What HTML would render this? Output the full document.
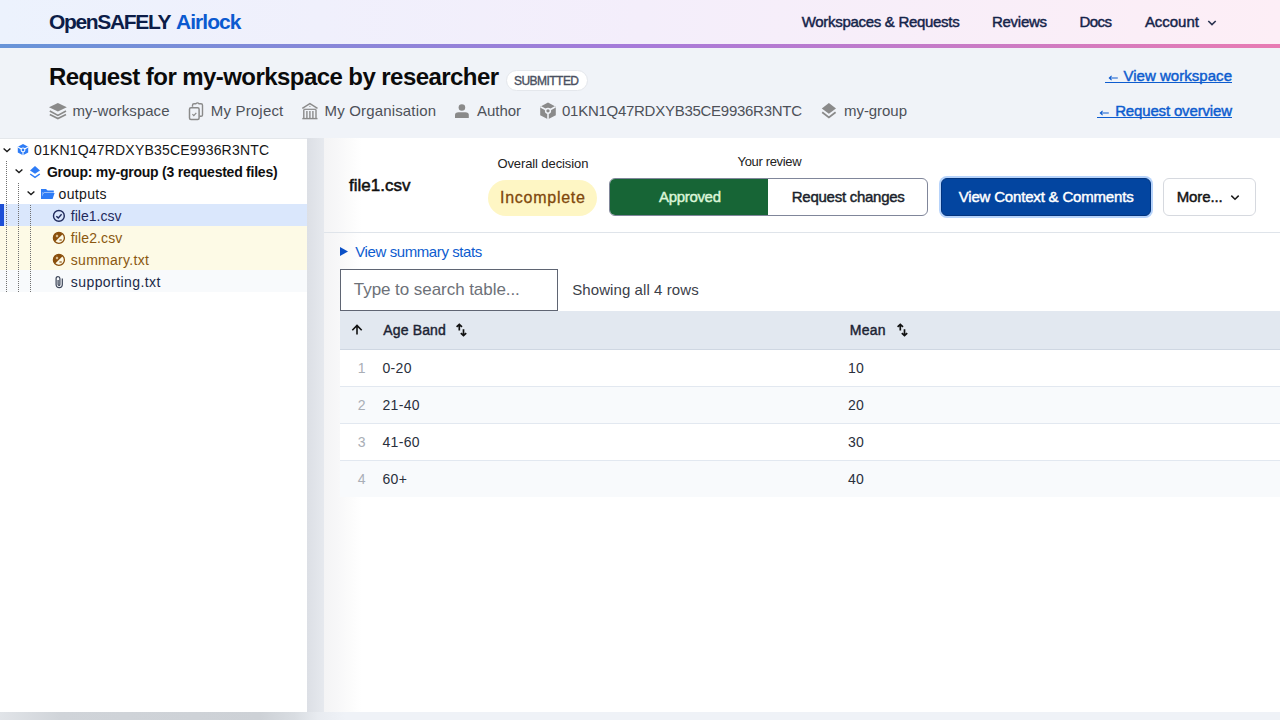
<!DOCTYPE html>
<html><head><meta charset="utf-8"><style>
html,body{margin:0;padding:0;}
body{width:1280px;height:720px;overflow:hidden;position:relative;background:#f0f3f8;font-family:"Liberation Sans",sans-serif;}
.t{position:absolute;white-space:nowrap;}
.ic{position:absolute;}
.hdr{position:absolute;left:0;top:0;width:1280px;height:44px;background:linear-gradient(90deg,#ecf2fd 0%,#f4eefb 50%,#fdeef6 100%);}
.bar{position:absolute;left:0;top:44px;width:1280px;height:4px;background:linear-gradient(90deg,#6794d8 0%,#a77ad9 50%,#e87bb3 100%);}
.badge{position:absolute;box-sizing:border-box;border:1px solid #e4e7ec;border-radius:11px;background:#fff;}
.lnk{position:absolute;height:1.3px;background:#0d5ccf;}
.lp{position:absolute;left:0;top:139px;width:307px;height:573px;background:#fff;box-shadow:0 -1px 0 #e4e7eb;}
.rp{position:absolute;left:324px;top:138px;width:956px;height:574px;background:linear-gradient(90deg,#f4f4f5 0px,#f7f7f8 12px,#fbfbfb 24px,#ffffff 38px);}
.gap{position:absolute;left:307px;top:138px;width:17px;height:574px;background:linear-gradient(90deg,#dcdfe5,#e6e9ee);}
.shadowbot{position:absolute;left:0;top:712px;width:1280px;height:8px;background:linear-gradient(90deg,#e1e4e8 0px,#d0d4d9 60px,#cdd1d6 260px,#d9dde2 295px,#e8ebf0 318px,#eff2f7 345px);}
.dots{position:absolute;width:1px;background:repeating-linear-gradient(180deg,#707070 0px,#707070 1px,transparent 1px,transparent 2px);}
</style></head><body>
<div class="hdr"></div><div class="bar"></div><div class="t" style="left:49.00px;top:11.12px;font-size:21px;line-height:21px;color:#0c1d48;font-weight:700;letter-spacing:-1.340px;">OpenSAFELY</div>
<div class="t" style="left:176.00px;top:11.12px;font-size:21px;line-height:21px;color:#0b5ad0;font-weight:700;letter-spacing:-0.945px;">Airlock</div>
<div class="t" style="left:801.70px;top:14.20px;font-size:15px;line-height:15px;color:#15244a;font-weight:400;letter-spacing:-0.299px;-webkit-text-stroke:0.45px #15244a;">Workspaces &amp; Requests</div>
<div class="t" style="left:992.00px;top:14.20px;font-size:15px;line-height:15px;color:#15244a;font-weight:400;letter-spacing:-0.279px;-webkit-text-stroke:0.45px #15244a;">Reviews</div>
<div class="t" style="left:1079.60px;top:14.20px;font-size:15px;line-height:15px;color:#15244a;font-weight:400;letter-spacing:-0.591px;-webkit-text-stroke:0.45px #15244a;">Docs</div>
<div class="t" style="left:1144.90px;top:14.20px;font-size:15px;line-height:15px;color:#15244a;font-weight:400;letter-spacing:-0.034px;-webkit-text-stroke:0.45px #15244a;">Account</div>
<svg class="ic" style="left:1207px;top:19px" width="10" height="8" viewBox="0 0 10 8"><path d="M1.3 2 L5 5.6 L8.7 2" fill="none" stroke="#2a3350" stroke-width="1.6"/></svg><div class="t" style="left:49.00px;top:64.68px;font-size:24px;line-height:24px;color:#0b0b0b;font-weight:700;letter-spacing:-0.563px;">Request for my-workspace by researcher</div>
<div class="badge" style="left:505.5px;top:70.4px;width:82px;height:21px"></div><div class="t" style="left:514.00px;top:74.84px;font-size:12px;line-height:12px;color:#4a5060;font-weight:400;letter-spacing:-0.541px;-webkit-text-stroke:0.36px #4a5060;">SUBMITTED</div>
<div class="t" style="left:72.50px;top:103.30px;font-size:15px;line-height:15px;color:#4d5159;font-weight:400;letter-spacing:0.027px;">my-workspace</div>
<div class="t" style="left:210.70px;top:103.30px;font-size:15px;line-height:15px;color:#4d5159;font-weight:400;letter-spacing:0.193px;">My Project</div>
<div class="t" style="left:324.50px;top:103.30px;font-size:15px;line-height:15px;color:#4d5159;font-weight:400;letter-spacing:0.162px;">My Organisation</div>
<div class="t" style="left:477.00px;top:103.30px;font-size:15px;line-height:15px;color:#4d5159;font-weight:400;letter-spacing:-0.041px;">Author</div>
<div class="t" style="left:562.00px;top:103.30px;font-size:15px;line-height:15px;color:#4d5159;font-weight:400;letter-spacing:-0.270px;">01KN1Q47RDXYB35CE9936R3NTC</div>
<div class="t" style="left:844.00px;top:103.30px;font-size:15px;line-height:15px;color:#4d5159;font-weight:400;letter-spacing:-0.054px;">my-group</div>
<svg class="ic" style="left:48px;top:101px" width="20" height="20" viewBox="0 0 20 20"><path d="M9.9 1.9 L18.8 6.3 L9.9 10.6 L1 6.3 Z" fill="#8a8a8a"/><path d="M1.8 10 L9.9 14.4 L18 10" fill="none" stroke="#8a8a8a" stroke-width="1.7"/><path d="M1.8 13.5 L9.9 17.6 L18 13.5" fill="none" stroke="#8a8a8a" stroke-width="1.7"/></svg><svg class="ic" style="left:186px;top:101px" width="20" height="20" viewBox="0 0 20 20"><path d="M6.5 5.8 V4.2 Q6.5 2.8 8 2.8 H9.8 Q11.5 1 13 2.8 H15 Q16.5 2.8 16.5 4.2 V14 Q16.5 15.3 15 15.3 H13.6" fill="none" stroke="#8a8a8a" stroke-width="1.4"/><rect x="3.5" y="6.8" width="9.6" height="11.6" rx="1.5" fill="none" stroke="#8a8a8a" stroke-width="1.5"/><path d="M6.4 13.2 L7.8 14.6 L10.3 11.8" fill="none" stroke="#8a8a8a" stroke-width="1.2"/></svg><svg class="ic" style="left:300px;top:101px" width="20" height="20" viewBox="0 0 20 20"><path d="M2.3 7.4 L9.9 2.6 L17.5 7.4" fill="none" stroke="#8a8a8a" stroke-width="1.3"/><path d="M3.4 8.3 H16.4" stroke="#8a8a8a" stroke-width="1.2"/><path d="M3.8 9 V17 M6.9 10 V17 M9.9 10 V17 M12.9 10 V17 M16 9 V17" stroke="#8a8a8a" stroke-width="1.4"/><path d="M2.3 17.6 H17.5" stroke="#8a8a8a" stroke-width="1.4"/><path d="M9.2 5.4 H10.6" stroke="#8a8a8a" stroke-width="0.8"/></svg><svg class="ic" style="left:452px;top:101px" width="20" height="20" viewBox="0 0 20 20"><circle cx="9.9" cy="6.5" r="3.3" fill="#8a8a8a"/><path d="M3 17 V13.8 Q3 11.2 6.5 11.2 H13.3 Q16.8 11.2 16.8 13.8 V17 Z" fill="#8a8a8a"/></svg><svg class="ic" style="left:538px;top:100px" width="20" height="20" viewBox="0 0 20 20"><path d="M10 2.6 L17.8 6.8 V15.2 L10 19.2 L2.2 15.2 V6.8 Z" fill="#8a8a8a"/><path d="M2.5 6.8 L8 9.8 M17.5 6.8 L12 9.8 M10 13 V19.5" stroke="#f0f3f8" stroke-width="1.6"/><circle cx="10" cy="10.8" r="2.4" fill="#8a8a8a" stroke="#f0f3f8" stroke-width="1.5"/></svg><svg class="ic" style="left:819px;top:101px" width="20" height="20" viewBox="0 0 20 20"><path d="M9.9 2 L17 7.4 L9.9 12.8 L2.8 7.4 Z" fill="#8a8a8a"/><path d="M3.2 11.3 L9.9 16.4 L16.6 11.3" fill="none" stroke="#8a8a8a" stroke-width="1.8"/></svg><div class="lnk" style="left:1105px;top:82px;width:127px"></div><div class="lnk" style="left:1096.5px;top:117px;width:135.5px"></div><svg class="ic" style="left:1107.5px;top:75.1px" width="11" height="6" viewBox="0 0 11 6"><path d="M1.4 3 H9.8 M3.6 0.9 L1.3 3 L3.6 5.1" fill="none" stroke="#0d5ccf" stroke-width="1.05"/></svg><div class="t" style="left:1123.40px;top:68.10px;font-size:15px;line-height:15px;color:#0d5ccf;font-weight:400;letter-spacing:0.038px;-webkit-text-stroke:0.45px #0d5ccf;">View workspace</div>
<svg class="ic" style="left:1098.5px;top:110.4px" width="11" height="6" viewBox="0 0 11 6"><path d="M1.4 3 H9.8 M3.6 0.9 L1.3 3 L3.6 5.1" fill="none" stroke="#0d5ccf" stroke-width="1.05"/></svg><div class="t" style="left:1115.20px;top:103.30px;font-size:15px;line-height:15px;color:#0d5ccf;font-weight:400;letter-spacing:-0.162px;-webkit-text-stroke:0.45px #0d5ccf;">Request overview</div>
<div class="shadowbot"></div><div class="gap"></div><div class="lp"></div><div class="rp"></div><div style="position:absolute;left:0;top:204px;width:307px;height:22px;background:#dae7fc"></div><div style="position:absolute;left:0;top:204px;width:4px;height:22px;background:#1d4fd6"></div><div style="position:absolute;left:0;top:226px;width:307px;height:44px;background:#fdfae6"></div><div style="position:absolute;left:0;top:270px;width:307px;height:22px;background:#f8fafc"></div><div class="dots" style="left:6px;top:161px;height:131px"></div><div class="dots" style="left:18px;top:183px;height:109px"></div><div class="dots" style="left:30px;top:205px;height:87px"></div><svg class="ic" style="left:2px;top:146.5px" width="10" height="7" viewBox="0 0 10 7"><path d="M1.6 1.4 L5 4.6 L8.4 1.4" fill="none" stroke="#1a1a1a" stroke-width="1.35"/></svg><svg class="ic" style="left:14px;top:168.3px" width="10" height="7" viewBox="0 0 10 7"><path d="M1.6 1.4 L5 4.6 L8.4 1.4" fill="none" stroke="#1a1a1a" stroke-width="1.35"/></svg><svg class="ic" style="left:26px;top:190.3px" width="10" height="7" viewBox="0 0 10 7"><path d="M1.6 1.4 L5 4.6 L8.4 1.4" fill="none" stroke="#1a1a1a" stroke-width="1.35"/></svg><svg class="ic" style="left:17px;top:143px" width="12" height="13" viewBox="0 0 12 13"><path d="M6 1 L11.2 3.8 V9.4 L6 12.3 L0.8 9.4 V3.8 Z" fill="#2e7cf6"/><path d="M0.9 3.9 L4.4 5.9 M11.1 3.9 L7.6 5.9 M6 8.7 V12.5" stroke="#fff" stroke-width="1.1"/><circle cx="6" cy="6.9" r="1.9" fill="#2e7cf6" stroke="#fff" stroke-width="1.1"/></svg><svg class="ic" style="left:25px;top:161.5px" width="20" height="20" viewBox="0 0 20 20"><path d="M10 4.1 L15 8.4 L10 11.8 L5 8.4 Z" fill="#2e7cf6"/><path d="M5.2 12 L10 15.3 L14.8 12" fill="none" stroke="#2e7cf6" stroke-width="1.5"/></svg><svg class="ic" style="left:40px;top:188px" width="15" height="12" viewBox="0 0 15 12"><path d="M1 1 H6 L7.6 2.6 H13.8 V4.4 H4.4 Q3.2 4.4 3 5.6 L2.4 9 V4 H1 Z" fill="#2e7cf6"/><path d="M1 11 V3.5 H2.2 V8.4 L3.3 5.6 Q3.5 5 4.2 5 H14.6 L12.6 11 Z" fill="#2e7cf6"/></svg><svg class="ic" style="left:52px;top:209px" width="14" height="14" viewBox="0 0 14 14"><circle cx="6.9" cy="6.9" r="5.4" fill="none" stroke="#1f2a5c" stroke-width="1.4"/><path d="M4.3 7.2 L6.3 8.9 L9.6 5.2" fill="none" stroke="#1f2a5c" stroke-width="1.4"/></svg><svg class="ic" style="left:52px;top:231px" width="14" height="14" viewBox="0 0 14 14"><circle cx="6.9" cy="6.9" r="5.5" fill="none" stroke="#8a4f0c" stroke-width="1.3"/><path d="M3 10.8 A5.5 5.5 0 0 1 10.8 3 Z" fill="#8a4f0c"/><path d="M3.8 5 H6.2 M5 3.8 V6.2" stroke="#f0dcb4" stroke-width="1.1"/><path d="M7.4 9.0 H9.8" stroke="#8a4f0c" stroke-width="1.1"/></svg><svg class="ic" style="left:52px;top:253px" width="14" height="14" viewBox="0 0 14 14"><circle cx="6.9" cy="6.9" r="5.5" fill="none" stroke="#8a4f0c" stroke-width="1.3"/><path d="M3 10.8 A5.5 5.5 0 0 1 10.8 3 Z" fill="#8a4f0c"/><path d="M3.8 5 H6.2 M5 3.8 V6.2" stroke="#f0dcb4" stroke-width="1.1"/><path d="M7.4 9.0 H9.8" stroke="#8a4f0c" stroke-width="1.1"/></svg><svg class="ic" style="left:53px;top:274px" width="12" height="16" viewBox="0 0 12 16"><path d="M9.3 4.6 V10.6 A3.1 3.1 0 0 1 3.1 10.6 V4.6 A1.9 1.9 0 0 1 6.9 4.6 V10.4 A0.9 0.9 0 0 1 5.1 10.4 V6" fill="none" stroke="#3a4356" stroke-width="1.2"/></svg><div class="t" style="left:34.00px;top:142.95px;font-size:14px;line-height:14px;color:#161616;font-weight:400;letter-spacing:0.188px;">01KN1Q47RDXYB35CE9936R3NTC</div>
<div class="t" style="left:46.90px;top:164.65px;font-size:14px;line-height:14px;color:#101010;font-weight:700;letter-spacing:-0.238px;">Group: my-group (3 requested files)</div>
<div class="t" style="left:58.60px;top:186.55px;font-size:14px;line-height:14px;color:#161616;font-weight:400;letter-spacing:0.349px;">outputs</div>
<div class="t" style="left:70.80px;top:208.95px;font-size:14px;line-height:14px;color:#1f2a5c;font-weight:400;letter-spacing:0.017px;">file1.csv</div>
<div class="t" style="left:70.80px;top:230.95px;font-size:14px;line-height:14px;color:#8a5810;font-weight:400;letter-spacing:0.117px;">file2.csv</div>
<div class="t" style="left:70.80px;top:252.95px;font-size:14px;line-height:14px;color:#8a5810;font-weight:400;letter-spacing:0.283px;">summary.txt</div>
<div class="t" style="left:70.80px;top:274.95px;font-size:14px;line-height:14px;color:#1c2a48;font-weight:400;letter-spacing:0.422px;">supporting.txt</div>
<div class="t" style="left:349.00px;top:177.01px;font-size:17px;line-height:17px;color:#101010;font-weight:400;letter-spacing:0.012px;-webkit-text-stroke:0.51px #101010;">file1.csv</div>
<div class="t" style="left:497.40px;top:157.00px;font-size:13px;line-height:13px;color:#222222;font-weight:400;letter-spacing:-0.101px;">Overall decision</div>
<div style="position:absolute;left:488px;top:180px;width:109px;height:35.5px;border-radius:18px;background:#fef6c4"></div><div class="t" style="left:500.00px;top:190.26px;font-size:16px;line-height:16px;color:#80480c;font-weight:400;letter-spacing:0.741px;-webkit-text-stroke:0.3px #80480c;">Incomplete</div>
<div class="t" style="left:737.60px;top:155.00px;font-size:13px;line-height:13px;color:#222222;font-weight:400;letter-spacing:-0.347px;">Your review</div>
<div style="position:absolute;left:609px;top:178.4px;width:319px;height:37.2px;box-sizing:border-box;border:1px solid #80869a;border-radius:6px;overflow:hidden;background:#fff"><div style="position:absolute;left:0;top:0;width:158px;height:100%;background:#176536"></div></div><div class="t" style="left:659.00px;top:188.90px;font-size:15px;line-height:15px;color:#dcf5d8;font-weight:400;letter-spacing:-0.317px;-webkit-text-stroke:0.45px #dcf5d8;">Approved</div>
<div class="t" style="left:791.80px;top:188.90px;font-size:15px;line-height:15px;color:#1a1f2c;font-weight:400;letter-spacing:-0.269px;-webkit-text-stroke:0.45px #1a1f2c;">Request changes</div>
<div style="position:absolute;left:939px;top:176px;width:214px;height:42px;border-radius:8px;background:#b6d3fb"></div><div style="position:absolute;left:941px;top:178px;width:210px;height:38px;box-sizing:border-box;border-radius:6px;background:#0345a0;border:1px solid #02347e"></div><div class="t" style="left:958.70px;top:189.20px;font-size:15px;line-height:15px;color:#ffffff;font-weight:400;letter-spacing:-0.181px;-webkit-text-stroke:0.45px #ffffff;">View Context &amp; Comments</div>
<div style="position:absolute;left:1163px;top:178px;width:93.2px;height:37.6px;box-sizing:border-box;border:1px solid #d6d9df;border-radius:6px;background:#fff"></div><div class="t" style="left:1176.70px;top:189.20px;font-size:15px;line-height:15px;color:#141414;font-weight:400;letter-spacing:-0.117px;-webkit-text-stroke:0.45px #141414;">More...</div>
<svg class="ic" style="left:1230px;top:194px" width="10" height="8" viewBox="0 0 10 8"><path d="M1.3 1.6 L5 5.2 L8.7 1.6" fill="none" stroke="#1a1a1a" stroke-width="1.5"/></svg><div style="position:absolute;left:324px;top:232px;width:956px;height:1px;background:#dfe4ea"></div><svg class="ic" style="left:339px;top:246px" width="10" height="11" viewBox="0 0 10 11"><path d="M1 1 L9 5.5 L1 10 Z" fill="#0b50c6"/></svg><div class="t" style="left:355.30px;top:243.50px;font-size:15px;line-height:15px;color:#0d5ccf;font-weight:400;letter-spacing:-0.409px;">View summary stats</div>
<div style="position:absolute;left:340px;top:269px;width:218px;height:42px;box-sizing:border-box;border:1px solid #5f6573;background:#fff"></div><div class="t" style="left:353.80px;top:280.61px;font-size:17px;line-height:17px;color:#6d7178;font-weight:400;letter-spacing:-0.055px;">Type to search table...</div>
<div class="t" style="left:572.20px;top:281.70px;font-size:15px;line-height:15px;color:#3b4049;font-weight:400;letter-spacing:0.085px;">Showing all 4 rows</div>
<div style="position:absolute;left:340px;top:311px;width:940px;height:39px;background:#e2e8f0;border-bottom:1px solid #cfd7e2;box-sizing:border-box"></div><svg class="ic" style="left:350px;top:323px" width="14" height="14" viewBox="0 0 14 14"><path d="M2.3 7.3 L7 2.5 L11.7 7.3 M7 2.8 V11.5" fill="none" stroke="#111" stroke-width="1.6"/></svg><svg class="ic" style="left:454.1px;top:322px" width="14" height="16" viewBox="0 0 14 16"><path d="M2.6 4.8 L5.3 2.3 L8.0 4.8 M5.3 2.6 V8.6 M6.8 11.1 L9.5 13.6 L12.2 11.1 M9.5 7.3 V13.3" fill="none" stroke="#111" stroke-width="1.7"/></svg><svg class="ic" style="left:894.5px;top:322px" width="14" height="16" viewBox="0 0 14 16"><path d="M2.6 4.8 L5.3 2.3 L8.0 4.8 M5.3 2.6 V8.6 M6.8 11.1 L9.5 13.6 L12.2 11.1 M9.5 7.3 V13.3" fill="none" stroke="#111" stroke-width="1.7"/></svg><div class="t" style="left:383.30px;top:323.15px;font-size:14px;line-height:14px;color:#1c2333;font-weight:400;letter-spacing:0.145px;-webkit-text-stroke:0.42px #1c2333;">Age Band</div>
<div class="t" style="left:849.80px;top:323.15px;font-size:14px;line-height:14px;color:#1c2333;font-weight:400;letter-spacing:0.267px;-webkit-text-stroke:0.42px #1c2333;">Mean</div>
<div style="position:absolute;left:340px;top:350px;width:940px;height:37px;background:#ffffff;border-bottom:1px solid #e2e8f0;box-sizing:border-box"></div><div class="t" style="left:340px;width:25.5px;text-align:right;top:360.75px;font-size:14px;line-height:14px;color:#a9aeb6">1</div><div class="t" style="left:382.50px;top:360.75px;font-size:14px;line-height:14px;color:#2a303c;font-weight:400;letter-spacing:0.300px;">0-20</div>
<div class="t" style="left:848.00px;top:360.75px;font-size:14px;line-height:14px;color:#2a303c;font-weight:400;letter-spacing:0.300px;">10</div>
<div style="position:absolute;left:340px;top:387px;width:940px;height:37px;background:#f8fafc;border-bottom:1px solid #e2e8f0;box-sizing:border-box"></div><div class="t" style="left:340px;width:25.5px;text-align:right;top:397.75px;font-size:14px;line-height:14px;color:#a9aeb6">2</div><div class="t" style="left:382.50px;top:397.75px;font-size:14px;line-height:14px;color:#2a303c;font-weight:400;letter-spacing:0.300px;">21-40</div>
<div class="t" style="left:848.00px;top:397.75px;font-size:14px;line-height:14px;color:#2a303c;font-weight:400;letter-spacing:0.300px;">20</div>
<div style="position:absolute;left:340px;top:424px;width:940px;height:37px;background:#ffffff;border-bottom:1px solid #e2e8f0;box-sizing:border-box"></div><div class="t" style="left:340px;width:25.5px;text-align:right;top:434.75px;font-size:14px;line-height:14px;color:#a9aeb6">3</div><div class="t" style="left:382.50px;top:434.75px;font-size:14px;line-height:14px;color:#2a303c;font-weight:400;letter-spacing:0.300px;">41-60</div>
<div class="t" style="left:848.00px;top:434.75px;font-size:14px;line-height:14px;color:#2a303c;font-weight:400;letter-spacing:0.300px;">30</div>
<div style="position:absolute;left:340px;top:461px;width:940px;height:36px;background:#f8fafc"></div><div class="t" style="left:340px;width:25.5px;text-align:right;top:471.75px;font-size:14px;line-height:14px;color:#a9aeb6">4</div><div class="t" style="left:382.50px;top:471.75px;font-size:14px;line-height:14px;color:#2a303c;font-weight:400;letter-spacing:0.300px;">60+</div>
<div class="t" style="left:848.00px;top:471.75px;font-size:14px;line-height:14px;color:#2a303c;font-weight:400;letter-spacing:0.300px;">40</div>

</body></html>
